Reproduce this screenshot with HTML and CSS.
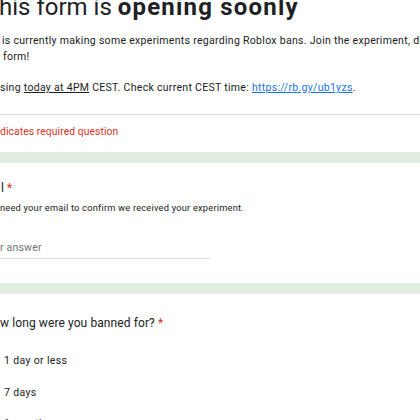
FILE: index.html
```html
<!DOCTYPE html>
<html lang="en">
<head>
<meta charset="utf-8">
<title>Form</title>
<link rel="stylesheet" href="styles.css">
</head>
<body>
<main class="form">
  <section class="card header-card">
    <div class="header-main">
      <h1 class="form-title">his form is <strong>opening soonly</strong></h1>
      <div class="form-desc">
        <div class="line l1">is currently making some experiments regarding Roblox bans. Join the experiment, do it by filling</div>
        <div class="line l2">form!</div>
        <div class="line blank">&nbsp;</div>
        <div class="line l3">sing <span class="u">today at 4PM</span> CEST. Check current CEST time: <a class="link" href="#">https://rb.gy/ub1yzs</a>.</div>
      </div>
    </div>
    <div class="required-note">dicates required question</div>
  </section>

  <section class="card question">
    <div class="q-title email-title">l <span class="req">*</span></div>
    <div class="q-desc">need your email to confirm we received your experiment.</div>
    <div class="text-input">r answer</div>
  </section>

  <section class="card question">
    <div class="q-title ban-title">w long were you banned for? <span class="req">*</span></div>
    <div class="options">
      <div class="option">1 day or less</div>
      <div class="option">7 days</div>
      <div class="option">1 month</div>
    </div>
  </section>
</main>
</body>
</html>
```
FILE: styles.css
```css
html, body {
  margin: 0;
  padding: 0;
  overflow: hidden;
  height: 100%;
}
body {
  background: #e2ede2;
  font-family: Roboto, "Liberation Sans", Arial, sans-serif;
  color: #202124;
}
.form {
  display: flex;
  flex-direction: column;
  gap: 11px;
  margin-top: -7px;
  width: 460px;
}
.card {
  background: #ffffff;
  white-space: nowrap;
}
.header-main {
  padding-bottom: 18px;
  border-bottom: 1px solid #dadce0;
}
.form-title {
  margin: 0;
  font-size: 24px;
  line-height: 28px;
  font-weight: 400;
  text-indent: -1px;
}
.form-title strong {
  font-weight: 700;
  letter-spacing: 1.2px;
}
.form-desc {
  margin-top: 12px;
  font-size: 10.5px;
  line-height: 15.5px;
  letter-spacing: 0.3px;
}
.l1 { padding-left: 2px; }
.l2 { padding-left: 3px; }
.l3 { padding-top: 0.5px; }
.u {
  text-decoration: underline;
}
.link {
  color: #1a73e8;
  text-decoration: underline;
}
.required-note {
  padding: 9.5px 0 12.5px;
  font-size: 10.3px;
  line-height: 15px;
  letter-spacing: 0.1px;
  color: #d93025;
}
.question {
  padding: 16px 0 24px;
}
.q-title {
  font-size: 12px;
  line-height: 18px;
  letter-spacing: 0.1px;
}
.email-title { padding-left: 1px; }
.ban-title { padding-top: 3.5px; }
.req {
  color: #d93025;
}
.q-desc {
  margin-top: 4px;
  font-size: 9.3px;
  line-height: 13px;
  letter-spacing: 0.2px;
}
.text-input {
  margin-top: 26.5px;
  width: 210px;
  padding-bottom: 3px;
  border-bottom: 1px solid #e0e0e0;
  font-size: 10.5px;
  line-height: 15px;
  letter-spacing: 0.2px;
  color: #70757a;
}
.options {
  margin-top: 13.5px;
  display: flex;
  flex-direction: column;
}
.option {
  height: 31.5px;
  display: flex;
  align-items: center;
  padding-left: 4px;
  font-size: 10.5px;
  letter-spacing: 0.35px;
}
```
